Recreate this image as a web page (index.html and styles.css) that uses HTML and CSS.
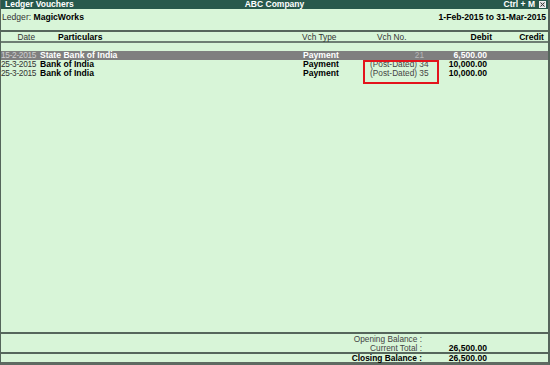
FILE: index.html
```html
<!DOCTYPE html>
<html>
<head>
<meta charset="utf-8">
<link rel="stylesheet" href="styles.css">
</head>
<body>
<div class="window">
  <div class="titlebar">
    <span class="t-left">Ledger Vouchers</span>
    <span class="t-center">ABC Company</span>
    <span class="t-right">Ctrl + M <span class="closebox"><svg width="5" height="5" viewBox="0 0 5 5"><path d="M0.5 0.5 L4.5 4.5 M4.5 0.5 L0.5 4.5" stroke="#3a3a3a" stroke-width="1"/></svg></span></span>
  </div>
  <div class="ledgerrow">
    <span class="ledger"><span class="lbl">Ledger:</span> <b>MagicWorks</b></span>
    <b class="period">1-Feb-2015 to 31-Mar-2015</b>
  </div>
  <div class="grid colhead">
    <span class="c-date">Date</span>
    <span class="c-part">Particulars</span>
    <span class="c-type">Vch Type</span>
    <span class="c-no">Vch No.</span>
    <span class="c-debit">Debit</span>
    <span class="c-credit">Credit</span>
  </div>
  <div class="body">
    <div class="grid row selected">
      <span class="c-date">15-2-2015</span>
      <span class="c-part">State Bank of India</span>
      <span class="c-type">Payment</span>
      <span class="c-no">21</span>
      <span class="c-debit">6,500.00</span>
      <span class="c-credit"></span>
    </div>
    <div class="grid row">
      <span class="c-date">25-3-2015</span>
      <span class="c-part">Bank of India</span>
      <span class="c-type">Payment</span>
      <span class="c-no">(Post-Dated) 34</span>
      <span class="c-debit">10,000.00</span>
      <span class="c-credit"></span>
    </div>
    <div class="grid row">
      <span class="c-date">25-3-2015</span>
      <span class="c-part">Bank of India</span>
      <span class="c-type">Payment</span>
      <span class="c-no">(Post-Dated) 35</span>
      <span class="c-debit">10,000.00</span>
      <span class="c-credit"></span>
    </div>
  </div>
  <div class="totals">
    <div class="grid trow">
      <span class="t-label">Opening Balance :</span>
      <span class="c-debit"></span>
      <span class="c-credit"></span>
    </div>
    <div class="grid trow">
      <span class="t-label">Current Total :</span>
      <span class="c-debit">26,500.00</span>
      <span class="c-credit"></span>
    </div>
  </div>
  <div class="closing">
    <div class="grid trow">
      <span class="t-label strong">Closing Balance :</span>
      <span class="c-debit">26,500.00</span>
      <span class="c-credit"></span>
    </div>
  </div>
  <div class="highlight"></div>
</div>
</body>
</html>
```

FILE: styles.css
```css
* { box-sizing: border-box; }
html, body { margin: 0; padding: 0; }
body {
  font-family: "Liberation Sans", Arial, sans-serif;
  font-size: 8.3px;
  color: #333;
  background: #ffffff;
}
.window {
  position: relative;
  width: 550px;
  height: 365px;
  background: #d8f5d8;
  border-left: 1px solid #55655b;
  border-right: 2px solid #55655b;
  border-bottom: 3px solid #5f6a62;
  display: flex;
  flex-direction: column;
}
.titlebar {
  height: 9px;
  background: #28594c;
  color: #ffffff;
  font-weight: bold;
  font-size: 8.5px;
  display: flex;
  align-items: center;
  padding: 0 2px 0 4px;
  line-height: 9px;
  position: relative;
}
.t-left { flex: 1; }
.t-center { position: absolute; left: 0; right: 0; text-align: center; pointer-events: none; }
.t-right { display: flex; align-items: center; gap: 4px; }
.closebox {
  width: 7px; height: 7px;
  background: #d8d8d8;
  border: 1px solid #f0f0f0;
  display: flex; align-items: center; justify-content: center;
}
.closebox svg { display: block; }
.ledgerrow {
  height: 21px;
  display: flex;
  justify-content: space-between;
  padding: 4px 2px 0 1px;
  line-height: 8px;
}
.ledger .lbl { color: #333; font-size: 8.6px; }
.ledgerrow b { color: #000; font-size: 8.6px; }
.grid {
  display: grid;
  grid-template-columns: 35px 264px 70px 56px 67px 53px;
  line-height: 9px;
  height: 9px;
  white-space: nowrap;
}
.colhead {
  height: 13px;
  border-top: 2px solid #56665c;
  border-bottom: 2px solid #6e7e73;
  padding-top: 1px;
}
.colhead .c-date { text-align: right; padding-right: 1px; }
.colhead .c-part { padding-left: 22px; font-weight: bold; color: #000; font-size: 8.6px; }
.colhead .c-type { padding-left: 2px; }
.colhead .c-no { padding-left: 7px; }
.colhead .c-debit { text-align: right; padding-right: 1px; font-weight: bold; color: #000; font-size: 8.6px; }
.colhead .c-credit { text-align: right; padding-right: 2px; font-weight: bold; color: #000; font-size: 8.6px; }
.body {
  flex: 1;
  padding-top: 8px;
}
.row .c-date { text-align: right; padding-right: 0; color: #333; letter-spacing: -0.3px; font-size: 8.3px; }
.row .c-part { padding-left: 4px; font-weight: bold; color: #000; font-size: 8.6px; }
.row .c-type { padding-left: 3px; font-weight: bold; color: #000; font-size: 8.6px; }
.row .c-no { text-align: right; padding-right: 2px; color: #444; }
.row .c-debit { text-align: right; padding-right: 6px; font-weight: bold; color: #000; font-size: 8.6px; }
.row.selected { background: #7f7f7f; }
.row.selected .c-date { color: #d0d0d0; }
.row.selected .c-part,
.row.selected .c-type,
.row.selected .c-debit { color: #ffffff; }
.row.selected .c-no { color: #b8b8b8; }
.totals {
  border-top: 2px solid #56665c;
  padding: 1px 0;
  height: 20px;
}
.closing {
  border-top: 2px solid #56665c;
  height: 10px;
}
.trow .t-label {
  grid-column: 1 / 5;
  text-align: right;
  padding-right: 4px;
  color: #444;
}
.trow .t-label.strong { font-weight: bold; color: #000; font-size: 8.4px; }
.trow .c-debit { text-align: right; padding-right: 6px; font-weight: bold; color: #000; font-size: 8.6px; }
.highlight {
  position: absolute;
  left: 362px;
  top: 60px;
  width: 76px;
  height: 24px;
  border: 2px solid #e3141c;
}
```
